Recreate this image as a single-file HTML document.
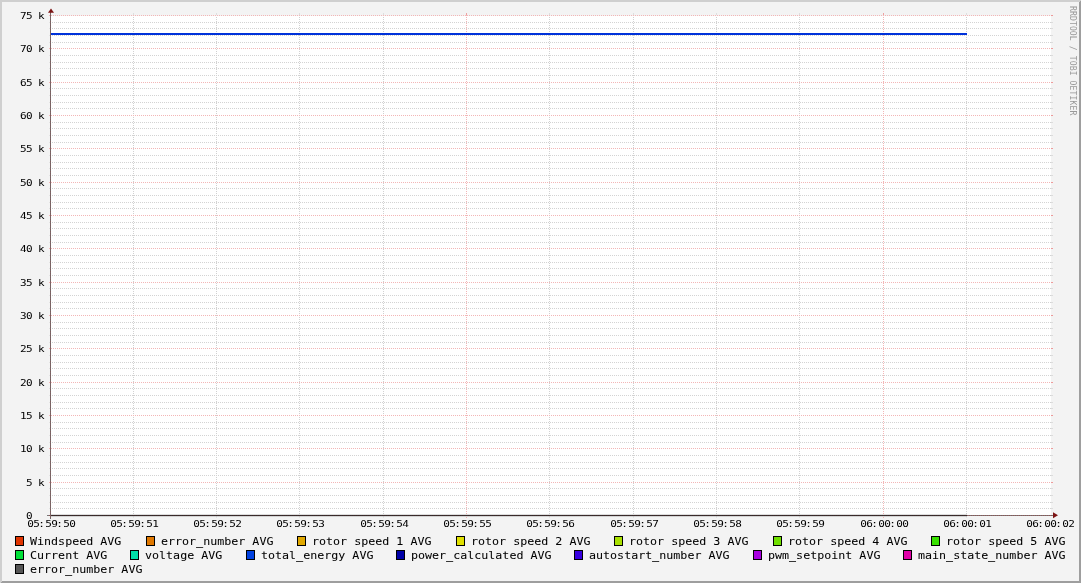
<!DOCTYPE html>
<html><head><meta charset="utf-8"><title>RRDtool graph</title>
<style>html,body{margin:0;padding:0;background:#f3f3f3;overflow:hidden}svg{display:block;will-change:transform}text{font-family:"DejaVu Sans Mono","Liberation Mono",monospace;fill:#000;white-space:pre;stroke:#000;stroke-width:0.05px}.ax{font-size:9.2px;letter-spacing:-0.539px;stroke:none}.lg{font-size:11.2px}.wm{font-size:8.1px;letter-spacing:0.1px;fill:#999999;stroke:none}</style></head><body>
<svg width="1081" height="583" viewBox="0 0 1081 583">
<rect x="0" y="0" width="1081" height="583" fill="#f3f3f3"/>
<g shape-rendering="crispEdges">
<rect x="0" y="0" width="1081" height="2" fill="#cfcfcf"/>
<rect x="0" y="0" width="2" height="583" fill="#cfcfcf"/>
<polygon points="1081,0 1081,583 0,583 2,581 1079,581 1079,2" fill="#9e9e9e"/>
<rect x="51" y="16" width="1000" height="500" fill="#ffffff"/>
<line x1="52" y1="508.5" x2="1051" y2="508.5" stroke="#d3d3d3" stroke-width="1" stroke-dasharray="1 1"/>
<line x1="1051" y1="508.5" x2="1053" y2="508.5" stroke="#dcdcdc" stroke-width="1"/>
<line x1="49" y1="508.5" x2="51" y2="508.5" stroke="#e2e2e2" stroke-width="1"/>
<line x1="52" y1="502.5" x2="1051" y2="502.5" stroke="#d3d3d3" stroke-width="1" stroke-dasharray="1 1"/>
<line x1="1051" y1="502.5" x2="1053" y2="502.5" stroke="#dcdcdc" stroke-width="1"/>
<line x1="49" y1="502.5" x2="51" y2="502.5" stroke="#e2e2e2" stroke-width="1"/>
<line x1="52" y1="495.5" x2="1051" y2="495.5" stroke="#d3d3d3" stroke-width="1" stroke-dasharray="1 1"/>
<line x1="1051" y1="495.5" x2="1053" y2="495.5" stroke="#dcdcdc" stroke-width="1"/>
<line x1="49" y1="495.5" x2="51" y2="495.5" stroke="#e2e2e2" stroke-width="1"/>
<line x1="52" y1="488.5" x2="1051" y2="488.5" stroke="#d3d3d3" stroke-width="1" stroke-dasharray="1 1"/>
<line x1="1051" y1="488.5" x2="1053" y2="488.5" stroke="#dcdcdc" stroke-width="1"/>
<line x1="49" y1="488.5" x2="51" y2="488.5" stroke="#e2e2e2" stroke-width="1"/>
<line x1="52" y1="475.5" x2="1051" y2="475.5" stroke="#d3d3d3" stroke-width="1" stroke-dasharray="1 1"/>
<line x1="1051" y1="475.5" x2="1053" y2="475.5" stroke="#dcdcdc" stroke-width="1"/>
<line x1="49" y1="475.5" x2="51" y2="475.5" stroke="#e2e2e2" stroke-width="1"/>
<line x1="52" y1="468.5" x2="1051" y2="468.5" stroke="#d3d3d3" stroke-width="1" stroke-dasharray="1 1"/>
<line x1="1051" y1="468.5" x2="1053" y2="468.5" stroke="#dcdcdc" stroke-width="1"/>
<line x1="49" y1="468.5" x2="51" y2="468.5" stroke="#e2e2e2" stroke-width="1"/>
<line x1="52" y1="462.5" x2="1051" y2="462.5" stroke="#d3d3d3" stroke-width="1" stroke-dasharray="1 1"/>
<line x1="1051" y1="462.5" x2="1053" y2="462.5" stroke="#dcdcdc" stroke-width="1"/>
<line x1="49" y1="462.5" x2="51" y2="462.5" stroke="#e2e2e2" stroke-width="1"/>
<line x1="52" y1="455.5" x2="1051" y2="455.5" stroke="#d3d3d3" stroke-width="1" stroke-dasharray="1 1"/>
<line x1="1051" y1="455.5" x2="1053" y2="455.5" stroke="#dcdcdc" stroke-width="1"/>
<line x1="49" y1="455.5" x2="51" y2="455.5" stroke="#e2e2e2" stroke-width="1"/>
<line x1="52" y1="442.5" x2="1051" y2="442.5" stroke="#d3d3d3" stroke-width="1" stroke-dasharray="1 1"/>
<line x1="1051" y1="442.5" x2="1053" y2="442.5" stroke="#dcdcdc" stroke-width="1"/>
<line x1="49" y1="442.5" x2="51" y2="442.5" stroke="#e2e2e2" stroke-width="1"/>
<line x1="52" y1="435.5" x2="1051" y2="435.5" stroke="#d3d3d3" stroke-width="1" stroke-dasharray="1 1"/>
<line x1="1051" y1="435.5" x2="1053" y2="435.5" stroke="#dcdcdc" stroke-width="1"/>
<line x1="49" y1="435.5" x2="51" y2="435.5" stroke="#e2e2e2" stroke-width="1"/>
<line x1="52" y1="428.5" x2="1051" y2="428.5" stroke="#d3d3d3" stroke-width="1" stroke-dasharray="1 1"/>
<line x1="1051" y1="428.5" x2="1053" y2="428.5" stroke="#dcdcdc" stroke-width="1"/>
<line x1="49" y1="428.5" x2="51" y2="428.5" stroke="#e2e2e2" stroke-width="1"/>
<line x1="52" y1="422.5" x2="1051" y2="422.5" stroke="#d3d3d3" stroke-width="1" stroke-dasharray="1 1"/>
<line x1="1051" y1="422.5" x2="1053" y2="422.5" stroke="#dcdcdc" stroke-width="1"/>
<line x1="49" y1="422.5" x2="51" y2="422.5" stroke="#e2e2e2" stroke-width="1"/>
<line x1="52" y1="408.5" x2="1051" y2="408.5" stroke="#d3d3d3" stroke-width="1" stroke-dasharray="1 1"/>
<line x1="1051" y1="408.5" x2="1053" y2="408.5" stroke="#dcdcdc" stroke-width="1"/>
<line x1="49" y1="408.5" x2="51" y2="408.5" stroke="#e2e2e2" stroke-width="1"/>
<line x1="52" y1="402.5" x2="1051" y2="402.5" stroke="#d3d3d3" stroke-width="1" stroke-dasharray="1 1"/>
<line x1="1051" y1="402.5" x2="1053" y2="402.5" stroke="#dcdcdc" stroke-width="1"/>
<line x1="49" y1="402.5" x2="51" y2="402.5" stroke="#e2e2e2" stroke-width="1"/>
<line x1="52" y1="395.5" x2="1051" y2="395.5" stroke="#d3d3d3" stroke-width="1" stroke-dasharray="1 1"/>
<line x1="1051" y1="395.5" x2="1053" y2="395.5" stroke="#dcdcdc" stroke-width="1"/>
<line x1="49" y1="395.5" x2="51" y2="395.5" stroke="#e2e2e2" stroke-width="1"/>
<line x1="52" y1="388.5" x2="1051" y2="388.5" stroke="#d3d3d3" stroke-width="1" stroke-dasharray="1 1"/>
<line x1="1051" y1="388.5" x2="1053" y2="388.5" stroke="#dcdcdc" stroke-width="1"/>
<line x1="49" y1="388.5" x2="51" y2="388.5" stroke="#e2e2e2" stroke-width="1"/>
<line x1="52" y1="375.5" x2="1051" y2="375.5" stroke="#d3d3d3" stroke-width="1" stroke-dasharray="1 1"/>
<line x1="1051" y1="375.5" x2="1053" y2="375.5" stroke="#dcdcdc" stroke-width="1"/>
<line x1="49" y1="375.5" x2="51" y2="375.5" stroke="#e2e2e2" stroke-width="1"/>
<line x1="52" y1="368.5" x2="1051" y2="368.5" stroke="#d3d3d3" stroke-width="1" stroke-dasharray="1 1"/>
<line x1="1051" y1="368.5" x2="1053" y2="368.5" stroke="#dcdcdc" stroke-width="1"/>
<line x1="49" y1="368.5" x2="51" y2="368.5" stroke="#e2e2e2" stroke-width="1"/>
<line x1="52" y1="362.5" x2="1051" y2="362.5" stroke="#d3d3d3" stroke-width="1" stroke-dasharray="1 1"/>
<line x1="1051" y1="362.5" x2="1053" y2="362.5" stroke="#dcdcdc" stroke-width="1"/>
<line x1="49" y1="362.5" x2="51" y2="362.5" stroke="#e2e2e2" stroke-width="1"/>
<line x1="52" y1="355.5" x2="1051" y2="355.5" stroke="#d3d3d3" stroke-width="1" stroke-dasharray="1 1"/>
<line x1="1051" y1="355.5" x2="1053" y2="355.5" stroke="#dcdcdc" stroke-width="1"/>
<line x1="49" y1="355.5" x2="51" y2="355.5" stroke="#e2e2e2" stroke-width="1"/>
<line x1="52" y1="342.5" x2="1051" y2="342.5" stroke="#d3d3d3" stroke-width="1" stroke-dasharray="1 1"/>
<line x1="1051" y1="342.5" x2="1053" y2="342.5" stroke="#dcdcdc" stroke-width="1"/>
<line x1="49" y1="342.5" x2="51" y2="342.5" stroke="#e2e2e2" stroke-width="1"/>
<line x1="52" y1="335.5" x2="1051" y2="335.5" stroke="#d3d3d3" stroke-width="1" stroke-dasharray="1 1"/>
<line x1="1051" y1="335.5" x2="1053" y2="335.5" stroke="#dcdcdc" stroke-width="1"/>
<line x1="49" y1="335.5" x2="51" y2="335.5" stroke="#e2e2e2" stroke-width="1"/>
<line x1="52" y1="328.5" x2="1051" y2="328.5" stroke="#d3d3d3" stroke-width="1" stroke-dasharray="1 1"/>
<line x1="1051" y1="328.5" x2="1053" y2="328.5" stroke="#dcdcdc" stroke-width="1"/>
<line x1="49" y1="328.5" x2="51" y2="328.5" stroke="#e2e2e2" stroke-width="1"/>
<line x1="52" y1="322.5" x2="1051" y2="322.5" stroke="#d3d3d3" stroke-width="1" stroke-dasharray="1 1"/>
<line x1="1051" y1="322.5" x2="1053" y2="322.5" stroke="#dcdcdc" stroke-width="1"/>
<line x1="49" y1="322.5" x2="51" y2="322.5" stroke="#e2e2e2" stroke-width="1"/>
<line x1="52" y1="308.5" x2="1051" y2="308.5" stroke="#d3d3d3" stroke-width="1" stroke-dasharray="1 1"/>
<line x1="1051" y1="308.5" x2="1053" y2="308.5" stroke="#dcdcdc" stroke-width="1"/>
<line x1="49" y1="308.5" x2="51" y2="308.5" stroke="#e2e2e2" stroke-width="1"/>
<line x1="52" y1="302.5" x2="1051" y2="302.5" stroke="#d3d3d3" stroke-width="1" stroke-dasharray="1 1"/>
<line x1="1051" y1="302.5" x2="1053" y2="302.5" stroke="#dcdcdc" stroke-width="1"/>
<line x1="49" y1="302.5" x2="51" y2="302.5" stroke="#e2e2e2" stroke-width="1"/>
<line x1="52" y1="295.5" x2="1051" y2="295.5" stroke="#d3d3d3" stroke-width="1" stroke-dasharray="1 1"/>
<line x1="1051" y1="295.5" x2="1053" y2="295.5" stroke="#dcdcdc" stroke-width="1"/>
<line x1="49" y1="295.5" x2="51" y2="295.5" stroke="#e2e2e2" stroke-width="1"/>
<line x1="52" y1="288.5" x2="1051" y2="288.5" stroke="#d3d3d3" stroke-width="1" stroke-dasharray="1 1"/>
<line x1="1051" y1="288.5" x2="1053" y2="288.5" stroke="#dcdcdc" stroke-width="1"/>
<line x1="49" y1="288.5" x2="51" y2="288.5" stroke="#e2e2e2" stroke-width="1"/>
<line x1="52" y1="275.5" x2="1051" y2="275.5" stroke="#d3d3d3" stroke-width="1" stroke-dasharray="1 1"/>
<line x1="1051" y1="275.5" x2="1053" y2="275.5" stroke="#dcdcdc" stroke-width="1"/>
<line x1="49" y1="275.5" x2="51" y2="275.5" stroke="#e2e2e2" stroke-width="1"/>
<line x1="52" y1="268.5" x2="1051" y2="268.5" stroke="#d3d3d3" stroke-width="1" stroke-dasharray="1 1"/>
<line x1="1051" y1="268.5" x2="1053" y2="268.5" stroke="#dcdcdc" stroke-width="1"/>
<line x1="49" y1="268.5" x2="51" y2="268.5" stroke="#e2e2e2" stroke-width="1"/>
<line x1="52" y1="262.5" x2="1051" y2="262.5" stroke="#d3d3d3" stroke-width="1" stroke-dasharray="1 1"/>
<line x1="1051" y1="262.5" x2="1053" y2="262.5" stroke="#dcdcdc" stroke-width="1"/>
<line x1="49" y1="262.5" x2="51" y2="262.5" stroke="#e2e2e2" stroke-width="1"/>
<line x1="52" y1="255.5" x2="1051" y2="255.5" stroke="#d3d3d3" stroke-width="1" stroke-dasharray="1 1"/>
<line x1="1051" y1="255.5" x2="1053" y2="255.5" stroke="#dcdcdc" stroke-width="1"/>
<line x1="49" y1="255.5" x2="51" y2="255.5" stroke="#e2e2e2" stroke-width="1"/>
<line x1="52" y1="242.5" x2="1051" y2="242.5" stroke="#d3d3d3" stroke-width="1" stroke-dasharray="1 1"/>
<line x1="1051" y1="242.5" x2="1053" y2="242.5" stroke="#dcdcdc" stroke-width="1"/>
<line x1="49" y1="242.5" x2="51" y2="242.5" stroke="#e2e2e2" stroke-width="1"/>
<line x1="52" y1="235.5" x2="1051" y2="235.5" stroke="#d3d3d3" stroke-width="1" stroke-dasharray="1 1"/>
<line x1="1051" y1="235.5" x2="1053" y2="235.5" stroke="#dcdcdc" stroke-width="1"/>
<line x1="49" y1="235.5" x2="51" y2="235.5" stroke="#e2e2e2" stroke-width="1"/>
<line x1="52" y1="228.5" x2="1051" y2="228.5" stroke="#d3d3d3" stroke-width="1" stroke-dasharray="1 1"/>
<line x1="1051" y1="228.5" x2="1053" y2="228.5" stroke="#dcdcdc" stroke-width="1"/>
<line x1="49" y1="228.5" x2="51" y2="228.5" stroke="#e2e2e2" stroke-width="1"/>
<line x1="52" y1="222.5" x2="1051" y2="222.5" stroke="#d3d3d3" stroke-width="1" stroke-dasharray="1 1"/>
<line x1="1051" y1="222.5" x2="1053" y2="222.5" stroke="#dcdcdc" stroke-width="1"/>
<line x1="49" y1="222.5" x2="51" y2="222.5" stroke="#e2e2e2" stroke-width="1"/>
<line x1="52" y1="208.5" x2="1051" y2="208.5" stroke="#d3d3d3" stroke-width="1" stroke-dasharray="1 1"/>
<line x1="1051" y1="208.5" x2="1053" y2="208.5" stroke="#dcdcdc" stroke-width="1"/>
<line x1="49" y1="208.5" x2="51" y2="208.5" stroke="#e2e2e2" stroke-width="1"/>
<line x1="52" y1="202.5" x2="1051" y2="202.5" stroke="#d3d3d3" stroke-width="1" stroke-dasharray="1 1"/>
<line x1="1051" y1="202.5" x2="1053" y2="202.5" stroke="#dcdcdc" stroke-width="1"/>
<line x1="49" y1="202.5" x2="51" y2="202.5" stroke="#e2e2e2" stroke-width="1"/>
<line x1="52" y1="195.5" x2="1051" y2="195.5" stroke="#d3d3d3" stroke-width="1" stroke-dasharray="1 1"/>
<line x1="1051" y1="195.5" x2="1053" y2="195.5" stroke="#dcdcdc" stroke-width="1"/>
<line x1="49" y1="195.5" x2="51" y2="195.5" stroke="#e2e2e2" stroke-width="1"/>
<line x1="52" y1="188.5" x2="1051" y2="188.5" stroke="#d3d3d3" stroke-width="1" stroke-dasharray="1 1"/>
<line x1="1051" y1="188.5" x2="1053" y2="188.5" stroke="#dcdcdc" stroke-width="1"/>
<line x1="49" y1="188.5" x2="51" y2="188.5" stroke="#e2e2e2" stroke-width="1"/>
<line x1="52" y1="175.5" x2="1051" y2="175.5" stroke="#d3d3d3" stroke-width="1" stroke-dasharray="1 1"/>
<line x1="1051" y1="175.5" x2="1053" y2="175.5" stroke="#dcdcdc" stroke-width="1"/>
<line x1="49" y1="175.5" x2="51" y2="175.5" stroke="#e2e2e2" stroke-width="1"/>
<line x1="52" y1="168.5" x2="1051" y2="168.5" stroke="#d3d3d3" stroke-width="1" stroke-dasharray="1 1"/>
<line x1="1051" y1="168.5" x2="1053" y2="168.5" stroke="#dcdcdc" stroke-width="1"/>
<line x1="49" y1="168.5" x2="51" y2="168.5" stroke="#e2e2e2" stroke-width="1"/>
<line x1="52" y1="162.5" x2="1051" y2="162.5" stroke="#d3d3d3" stroke-width="1" stroke-dasharray="1 1"/>
<line x1="1051" y1="162.5" x2="1053" y2="162.5" stroke="#dcdcdc" stroke-width="1"/>
<line x1="49" y1="162.5" x2="51" y2="162.5" stroke="#e2e2e2" stroke-width="1"/>
<line x1="52" y1="155.5" x2="1051" y2="155.5" stroke="#d3d3d3" stroke-width="1" stroke-dasharray="1 1"/>
<line x1="1051" y1="155.5" x2="1053" y2="155.5" stroke="#dcdcdc" stroke-width="1"/>
<line x1="49" y1="155.5" x2="51" y2="155.5" stroke="#e2e2e2" stroke-width="1"/>
<line x1="52" y1="142.5" x2="1051" y2="142.5" stroke="#d3d3d3" stroke-width="1" stroke-dasharray="1 1"/>
<line x1="1051" y1="142.5" x2="1053" y2="142.5" stroke="#dcdcdc" stroke-width="1"/>
<line x1="49" y1="142.5" x2="51" y2="142.5" stroke="#e2e2e2" stroke-width="1"/>
<line x1="52" y1="135.5" x2="1051" y2="135.5" stroke="#d3d3d3" stroke-width="1" stroke-dasharray="1 1"/>
<line x1="1051" y1="135.5" x2="1053" y2="135.5" stroke="#dcdcdc" stroke-width="1"/>
<line x1="49" y1="135.5" x2="51" y2="135.5" stroke="#e2e2e2" stroke-width="1"/>
<line x1="52" y1="128.5" x2="1051" y2="128.5" stroke="#d3d3d3" stroke-width="1" stroke-dasharray="1 1"/>
<line x1="1051" y1="128.5" x2="1053" y2="128.5" stroke="#dcdcdc" stroke-width="1"/>
<line x1="49" y1="128.5" x2="51" y2="128.5" stroke="#e2e2e2" stroke-width="1"/>
<line x1="52" y1="122.5" x2="1051" y2="122.5" stroke="#d3d3d3" stroke-width="1" stroke-dasharray="1 1"/>
<line x1="1051" y1="122.5" x2="1053" y2="122.5" stroke="#dcdcdc" stroke-width="1"/>
<line x1="49" y1="122.5" x2="51" y2="122.5" stroke="#e2e2e2" stroke-width="1"/>
<line x1="52" y1="108.5" x2="1051" y2="108.5" stroke="#d3d3d3" stroke-width="1" stroke-dasharray="1 1"/>
<line x1="1051" y1="108.5" x2="1053" y2="108.5" stroke="#dcdcdc" stroke-width="1"/>
<line x1="49" y1="108.5" x2="51" y2="108.5" stroke="#e2e2e2" stroke-width="1"/>
<line x1="52" y1="102.5" x2="1051" y2="102.5" stroke="#d3d3d3" stroke-width="1" stroke-dasharray="1 1"/>
<line x1="1051" y1="102.5" x2="1053" y2="102.5" stroke="#dcdcdc" stroke-width="1"/>
<line x1="49" y1="102.5" x2="51" y2="102.5" stroke="#e2e2e2" stroke-width="1"/>
<line x1="52" y1="95.5" x2="1051" y2="95.5" stroke="#d3d3d3" stroke-width="1" stroke-dasharray="1 1"/>
<line x1="1051" y1="95.5" x2="1053" y2="95.5" stroke="#dcdcdc" stroke-width="1"/>
<line x1="49" y1="95.5" x2="51" y2="95.5" stroke="#e2e2e2" stroke-width="1"/>
<line x1="52" y1="88.5" x2="1051" y2="88.5" stroke="#d3d3d3" stroke-width="1" stroke-dasharray="1 1"/>
<line x1="1051" y1="88.5" x2="1053" y2="88.5" stroke="#dcdcdc" stroke-width="1"/>
<line x1="49" y1="88.5" x2="51" y2="88.5" stroke="#e2e2e2" stroke-width="1"/>
<line x1="52" y1="75.5" x2="1051" y2="75.5" stroke="#d3d3d3" stroke-width="1" stroke-dasharray="1 1"/>
<line x1="1051" y1="75.5" x2="1053" y2="75.5" stroke="#dcdcdc" stroke-width="1"/>
<line x1="49" y1="75.5" x2="51" y2="75.5" stroke="#e2e2e2" stroke-width="1"/>
<line x1="52" y1="68.5" x2="1051" y2="68.5" stroke="#d3d3d3" stroke-width="1" stroke-dasharray="1 1"/>
<line x1="1051" y1="68.5" x2="1053" y2="68.5" stroke="#dcdcdc" stroke-width="1"/>
<line x1="49" y1="68.5" x2="51" y2="68.5" stroke="#e2e2e2" stroke-width="1"/>
<line x1="52" y1="62.5" x2="1051" y2="62.5" stroke="#d3d3d3" stroke-width="1" stroke-dasharray="1 1"/>
<line x1="1051" y1="62.5" x2="1053" y2="62.5" stroke="#dcdcdc" stroke-width="1"/>
<line x1="49" y1="62.5" x2="51" y2="62.5" stroke="#e2e2e2" stroke-width="1"/>
<line x1="52" y1="55.5" x2="1051" y2="55.5" stroke="#d3d3d3" stroke-width="1" stroke-dasharray="1 1"/>
<line x1="1051" y1="55.5" x2="1053" y2="55.5" stroke="#dcdcdc" stroke-width="1"/>
<line x1="49" y1="55.5" x2="51" y2="55.5" stroke="#e2e2e2" stroke-width="1"/>
<line x1="52" y1="42.5" x2="1051" y2="42.5" stroke="#d3d3d3" stroke-width="1" stroke-dasharray="1 1"/>
<line x1="1051" y1="42.5" x2="1053" y2="42.5" stroke="#dcdcdc" stroke-width="1"/>
<line x1="49" y1="42.5" x2="51" y2="42.5" stroke="#e2e2e2" stroke-width="1"/>
<line x1="52" y1="35.5" x2="1051" y2="35.5" stroke="#d3d3d3" stroke-width="1" stroke-dasharray="1 1"/>
<line x1="1051" y1="35.5" x2="1053" y2="35.5" stroke="#dcdcdc" stroke-width="1"/>
<line x1="49" y1="35.5" x2="51" y2="35.5" stroke="#e2e2e2" stroke-width="1"/>
<line x1="52" y1="28.5" x2="1051" y2="28.5" stroke="#d3d3d3" stroke-width="1" stroke-dasharray="1 1"/>
<line x1="1051" y1="28.5" x2="1053" y2="28.5" stroke="#dcdcdc" stroke-width="1"/>
<line x1="49" y1="28.5" x2="51" y2="28.5" stroke="#e2e2e2" stroke-width="1"/>
<line x1="52" y1="22.5" x2="1051" y2="22.5" stroke="#d3d3d3" stroke-width="1" stroke-dasharray="1 1"/>
<line x1="1051" y1="22.5" x2="1053" y2="22.5" stroke="#dcdcdc" stroke-width="1"/>
<line x1="49" y1="22.5" x2="51" y2="22.5" stroke="#e2e2e2" stroke-width="1"/>
<line x1="133.5" y1="17" x2="133.5" y2="515" stroke="#d1d1d1" stroke-width="1" stroke-dasharray="1 1"/>
<line x1="133.5" y1="516" x2="133.5" y2="518" stroke="#e4e4e4" stroke-width="1"/>
<line x1="133.5" y1="13" x2="133.5" y2="15" stroke="#dedede" stroke-width="1"/>
<line x1="216.5" y1="17" x2="216.5" y2="515" stroke="#d1d1d1" stroke-width="1" stroke-dasharray="1 1"/>
<line x1="216.5" y1="516" x2="216.5" y2="518" stroke="#e4e4e4" stroke-width="1"/>
<line x1="216.5" y1="13" x2="216.5" y2="15" stroke="#dedede" stroke-width="1"/>
<line x1="299.5" y1="17" x2="299.5" y2="515" stroke="#d1d1d1" stroke-width="1" stroke-dasharray="1 1"/>
<line x1="299.5" y1="516" x2="299.5" y2="518" stroke="#e4e4e4" stroke-width="1"/>
<line x1="299.5" y1="13" x2="299.5" y2="15" stroke="#dedede" stroke-width="1"/>
<line x1="383.5" y1="17" x2="383.5" y2="515" stroke="#d1d1d1" stroke-width="1" stroke-dasharray="1 1"/>
<line x1="383.5" y1="516" x2="383.5" y2="518" stroke="#e4e4e4" stroke-width="1"/>
<line x1="383.5" y1="13" x2="383.5" y2="15" stroke="#dedede" stroke-width="1"/>
<line x1="549.5" y1="17" x2="549.5" y2="515" stroke="#d1d1d1" stroke-width="1" stroke-dasharray="1 1"/>
<line x1="549.5" y1="516" x2="549.5" y2="518" stroke="#e4e4e4" stroke-width="1"/>
<line x1="549.5" y1="13" x2="549.5" y2="15" stroke="#dedede" stroke-width="1"/>
<line x1="633.5" y1="17" x2="633.5" y2="515" stroke="#d1d1d1" stroke-width="1" stroke-dasharray="1 1"/>
<line x1="633.5" y1="516" x2="633.5" y2="518" stroke="#e4e4e4" stroke-width="1"/>
<line x1="633.5" y1="13" x2="633.5" y2="15" stroke="#dedede" stroke-width="1"/>
<line x1="716.5" y1="17" x2="716.5" y2="515" stroke="#d1d1d1" stroke-width="1" stroke-dasharray="1 1"/>
<line x1="716.5" y1="516" x2="716.5" y2="518" stroke="#e4e4e4" stroke-width="1"/>
<line x1="716.5" y1="13" x2="716.5" y2="15" stroke="#dedede" stroke-width="1"/>
<line x1="799.5" y1="17" x2="799.5" y2="515" stroke="#d1d1d1" stroke-width="1" stroke-dasharray="1 1"/>
<line x1="799.5" y1="516" x2="799.5" y2="518" stroke="#e4e4e4" stroke-width="1"/>
<line x1="799.5" y1="13" x2="799.5" y2="15" stroke="#dedede" stroke-width="1"/>
<line x1="966.5" y1="17" x2="966.5" y2="515" stroke="#d1d1d1" stroke-width="1" stroke-dasharray="1 1"/>
<line x1="966.5" y1="516" x2="966.5" y2="518" stroke="#e4e4e4" stroke-width="1"/>
<line x1="966.5" y1="13" x2="966.5" y2="15" stroke="#dedede" stroke-width="1"/>
<line x1="49" y1="515.5" x2="1051" y2="515.5" stroke="#f3b6b6" stroke-width="1" stroke-dasharray="1 1"/>
<line x1="1051" y1="515.5" x2="1053" y2="515.5" stroke="#ee9a9a" stroke-width="1"/>
<line x1="49" y1="482.5" x2="1051" y2="482.5" stroke="#f3b6b6" stroke-width="1" stroke-dasharray="1 1"/>
<line x1="1051" y1="482.5" x2="1053" y2="482.5" stroke="#ee9a9a" stroke-width="1"/>
<line x1="49" y1="448.5" x2="1051" y2="448.5" stroke="#f3b6b6" stroke-width="1" stroke-dasharray="1 1"/>
<line x1="1051" y1="448.5" x2="1053" y2="448.5" stroke="#ee9a9a" stroke-width="1"/>
<line x1="49" y1="415.5" x2="1051" y2="415.5" stroke="#f3b6b6" stroke-width="1" stroke-dasharray="1 1"/>
<line x1="1051" y1="415.5" x2="1053" y2="415.5" stroke="#ee9a9a" stroke-width="1"/>
<line x1="49" y1="382.5" x2="1051" y2="382.5" stroke="#f3b6b6" stroke-width="1" stroke-dasharray="1 1"/>
<line x1="1051" y1="382.5" x2="1053" y2="382.5" stroke="#ee9a9a" stroke-width="1"/>
<line x1="49" y1="348.5" x2="1051" y2="348.5" stroke="#f3b6b6" stroke-width="1" stroke-dasharray="1 1"/>
<line x1="1051" y1="348.5" x2="1053" y2="348.5" stroke="#ee9a9a" stroke-width="1"/>
<line x1="49" y1="315.5" x2="1051" y2="315.5" stroke="#f3b6b6" stroke-width="1" stroke-dasharray="1 1"/>
<line x1="1051" y1="315.5" x2="1053" y2="315.5" stroke="#ee9a9a" stroke-width="1"/>
<line x1="49" y1="282.5" x2="1051" y2="282.5" stroke="#f3b6b6" stroke-width="1" stroke-dasharray="1 1"/>
<line x1="1051" y1="282.5" x2="1053" y2="282.5" stroke="#ee9a9a" stroke-width="1"/>
<line x1="49" y1="248.5" x2="1051" y2="248.5" stroke="#f3b6b6" stroke-width="1" stroke-dasharray="1 1"/>
<line x1="1051" y1="248.5" x2="1053" y2="248.5" stroke="#ee9a9a" stroke-width="1"/>
<line x1="49" y1="215.5" x2="1051" y2="215.5" stroke="#f3b6b6" stroke-width="1" stroke-dasharray="1 1"/>
<line x1="1051" y1="215.5" x2="1053" y2="215.5" stroke="#ee9a9a" stroke-width="1"/>
<line x1="49" y1="182.5" x2="1051" y2="182.5" stroke="#f3b6b6" stroke-width="1" stroke-dasharray="1 1"/>
<line x1="1051" y1="182.5" x2="1053" y2="182.5" stroke="#ee9a9a" stroke-width="1"/>
<line x1="49" y1="148.5" x2="1051" y2="148.5" stroke="#f3b6b6" stroke-width="1" stroke-dasharray="1 1"/>
<line x1="1051" y1="148.5" x2="1053" y2="148.5" stroke="#ee9a9a" stroke-width="1"/>
<line x1="49" y1="115.5" x2="1051" y2="115.5" stroke="#f3b6b6" stroke-width="1" stroke-dasharray="1 1"/>
<line x1="1051" y1="115.5" x2="1053" y2="115.5" stroke="#ee9a9a" stroke-width="1"/>
<line x1="49" y1="82.5" x2="1051" y2="82.5" stroke="#f3b6b6" stroke-width="1" stroke-dasharray="1 1"/>
<line x1="1051" y1="82.5" x2="1053" y2="82.5" stroke="#ee9a9a" stroke-width="1"/>
<line x1="49" y1="48.5" x2="1051" y2="48.5" stroke="#f3b6b6" stroke-width="1" stroke-dasharray="1 1"/>
<line x1="1051" y1="48.5" x2="1053" y2="48.5" stroke="#ee9a9a" stroke-width="1"/>
<line x1="49" y1="15.5" x2="1051" y2="15.5" stroke="#f3b6b6" stroke-width="1" stroke-dasharray="1 1"/>
<line x1="1051" y1="15.5" x2="1053" y2="15.5" stroke="#ee9a9a" stroke-width="1"/>
<line x1="466.5" y1="13" x2="466.5" y2="519" stroke="#f3b6b6" stroke-width="1" stroke-dasharray="1 1"/>
<line x1="466.5" y1="13" x2="466.5" y2="15" stroke="#eea0a0" stroke-width="1"/>
<line x1="883.5" y1="13" x2="883.5" y2="519" stroke="#f3b6b6" stroke-width="1" stroke-dasharray="1 1"/>
<line x1="883.5" y1="13" x2="883.5" y2="15" stroke="#eea0a0" stroke-width="1"/>
</g>
<g shape-rendering="crispEdges">
<rect x="51" y="33" width="916" height="2" fill="#0032da"/>
<rect x="51" y="514" width="916" height="1" fill="#555555" fill-opacity="0.2"/>
<rect x="51" y="516" width="916" height="1" fill="#555555" fill-opacity="0.2"/>
<rect x="47" y="515" width="1006" height="1" fill="#767676"/>
<line x1="49" y1="515.5" x2="1053" y2="515.5" stroke="#905555" stroke-width="1" stroke-dasharray="1 1"/>
<rect x="51" y="515" width="916" height="1" fill="#2e2e2e"/>
<line x1="51" y1="515.5" x2="967" y2="515.5" stroke="#472828" stroke-width="1" stroke-dasharray="1 1"/>
<rect x="50" y="12" width="1" height="507" fill="#6e6e6e"/>
<line x1="50.5" y1="13" x2="50.5" y2="519" stroke="#86595a" stroke-width="1" stroke-dasharray="1 1"/>
</g>
<polygon points="48,12.8 54,12.8 51,8.4" fill="#7d1414"/>
<polygon points="1053,512.2 1053,518.2 1058,515.2" fill="#7d1414"/>
<g>
<text class="ax" transform="translate(44.0,519.0) scale(1.2,1)" text-anchor="end">0  </text>
<text class="ax" transform="translate(44.0,486.0) scale(1.2,1)" text-anchor="end">5 k</text>
<text class="ax" transform="translate(44.0,452.0) scale(1.2,1)" text-anchor="end">10 k</text>
<text class="ax" transform="translate(44.0,419.0) scale(1.2,1)" text-anchor="end">15 k</text>
<text class="ax" transform="translate(44.0,386.0) scale(1.2,1)" text-anchor="end">20 k</text>
<text class="ax" transform="translate(44.0,352.0) scale(1.2,1)" text-anchor="end">25 k</text>
<text class="ax" transform="translate(44.0,319.0) scale(1.2,1)" text-anchor="end">30 k</text>
<text class="ax" transform="translate(44.0,286.0) scale(1.2,1)" text-anchor="end">35 k</text>
<text class="ax" transform="translate(44.0,252.0) scale(1.2,1)" text-anchor="end">40 k</text>
<text class="ax" transform="translate(44.0,219.0) scale(1.2,1)" text-anchor="end">45 k</text>
<text class="ax" transform="translate(44.0,186.0) scale(1.2,1)" text-anchor="end">50 k</text>
<text class="ax" transform="translate(44.0,152.0) scale(1.2,1)" text-anchor="end">55 k</text>
<text class="ax" transform="translate(44.0,119.0) scale(1.2,1)" text-anchor="end">60 k</text>
<text class="ax" transform="translate(44.0,86.0) scale(1.2,1)" text-anchor="end">65 k</text>
<text class="ax" transform="translate(44.0,52.0) scale(1.2,1)" text-anchor="end">70 k</text>
<text class="ax" transform="translate(44.0,19.0) scale(1.2,1)" text-anchor="end">75 k</text>
<text class="ax" transform="translate(51.30,527.0) scale(1.2,1)" text-anchor="middle" dx="0 0 -0.8 0.8 0 -0.8 0.8 0">05:59:50</text>
<text class="ax" transform="translate(134.30,527.0) scale(1.2,1)" text-anchor="middle" dx="0 0 -0.8 0.8 0 -0.8 0.8 0">05:59:51</text>
<text class="ax" transform="translate(217.30,527.0) scale(1.2,1)" text-anchor="middle" dx="0 0 -0.8 0.8 0 -0.8 0.8 0">05:59:52</text>
<text class="ax" transform="translate(300.30,527.0) scale(1.2,1)" text-anchor="middle" dx="0 0 -0.8 0.8 0 -0.8 0.8 0">05:59:53</text>
<text class="ax" transform="translate(384.30,527.0) scale(1.2,1)" text-anchor="middle" dx="0 0 -0.8 0.8 0 -0.8 0.8 0">05:59:54</text>
<text class="ax" transform="translate(467.30,527.0) scale(1.2,1)" text-anchor="middle" dx="0 0 -0.8 0.8 0 -0.8 0.8 0">05:59:55</text>
<text class="ax" transform="translate(550.30,527.0) scale(1.2,1)" text-anchor="middle" dx="0 0 -0.8 0.8 0 -0.8 0.8 0">05:59:56</text>
<text class="ax" transform="translate(634.30,527.0) scale(1.2,1)" text-anchor="middle" dx="0 0 -0.8 0.8 0 -0.8 0.8 0">05:59:57</text>
<text class="ax" transform="translate(717.30,527.0) scale(1.2,1)" text-anchor="middle" dx="0 0 -0.8 0.8 0 -0.8 0.8 0">05:59:58</text>
<text class="ax" transform="translate(800.30,527.0) scale(1.2,1)" text-anchor="middle" dx="0 0 -0.8 0.8 0 -0.8 0.8 0">05:59:59</text>
<text class="ax" transform="translate(884.30,527.0) scale(1.2,1)" text-anchor="middle" dx="0 0 -0.8 0.8 0 -0.8 0.8 0">06:00:00</text>
<text class="ax" transform="translate(967.30,527.0) scale(1.2,1)" text-anchor="middle" dx="0 0 -0.8 0.8 0 -0.8 0.8 0">06:00:01</text>
<text class="ax" transform="translate(1050.30,527.0) scale(1.2,1)" text-anchor="middle" dx="0 0 -0.8 0.8 0 -0.8 0.8 0">06:00:02</text>
<rect x="15.5" y="536.5" width="8" height="9" fill="#e03400" stroke="#000" stroke-width="1" shape-rendering="crispEdges"/>
<text class="lg" transform="translate(30.0,545.0) scale(1.0427,1)">Windspeed AVG</text>
<rect x="146.5" y="536.5" width="8" height="9" fill="#e07800" stroke="#000" stroke-width="1" shape-rendering="crispEdges"/>
<text class="lg" transform="translate(161.0,545.0) scale(1.0427,1)">error_number AVG</text>
<rect x="196" y="547" width="7" height="1" fill="#000" fill-opacity="0.62" shape-rendering="crispEdges"/>
<rect x="297.5" y="536.5" width="8" height="9" fill="#e0a800" stroke="#000" stroke-width="1" shape-rendering="crispEdges"/>
<text class="lg" transform="translate(312.0,545.0) scale(1.0427,1)">rotor speed 1 AVG</text>
<rect x="456.5" y="536.5" width="8" height="9" fill="#e0e000" stroke="#000" stroke-width="1" shape-rendering="crispEdges"/>
<text class="lg" transform="translate(471.0,545.0) scale(1.0427,1)">rotor speed 2 AVG</text>
<rect x="614.5" y="536.5" width="8" height="9" fill="#a8e000" stroke="#000" stroke-width="1" shape-rendering="crispEdges"/>
<text class="lg" transform="translate(629.0,545.0) scale(1.0427,1)">rotor speed 3 AVG</text>
<rect x="773.5" y="536.5" width="8" height="9" fill="#70e000" stroke="#000" stroke-width="1" shape-rendering="crispEdges"/>
<text class="lg" transform="translate(788.0,545.0) scale(1.0427,1)">rotor speed 4 AVG</text>
<rect x="931.5" y="536.5" width="8" height="9" fill="#38e000" stroke="#000" stroke-width="1" shape-rendering="crispEdges"/>
<text class="lg" transform="translate(946.0,545.0) scale(1.0427,1)">rotor speed 5 AVG</text>
<rect x="15.5" y="550.5" width="8" height="9" fill="#00e038" stroke="#000" stroke-width="1" shape-rendering="crispEdges"/>
<text class="lg" transform="translate(30.0,559.0) scale(1.0427,1)">Current AVG</text>
<rect x="130.5" y="550.5" width="8" height="9" fill="#00e0a8" stroke="#000" stroke-width="1" shape-rendering="crispEdges"/>
<text class="lg" transform="translate(145.0,559.0) scale(1.0427,1)">voltage AVG</text>
<rect x="246.5" y="550.5" width="8" height="9" fill="#0040e0" stroke="#000" stroke-width="1" shape-rendering="crispEdges"/>
<text class="lg" transform="translate(261.0,559.0) scale(1.0427,1)">total_energy AVG</text>
<rect x="296" y="561" width="7" height="1" fill="#000" fill-opacity="0.62" shape-rendering="crispEdges"/>
<rect x="396.5" y="550.5" width="8" height="9" fill="#0000a8" stroke="#000" stroke-width="1" shape-rendering="crispEdges"/>
<text class="lg" transform="translate(411.0,559.0) scale(1.0427,1)">power_calculated AVG</text>
<rect x="446" y="561" width="7" height="1" fill="#000" fill-opacity="0.62" shape-rendering="crispEdges"/>
<rect x="574.5" y="550.5" width="8" height="9" fill="#3800e0" stroke="#000" stroke-width="1" shape-rendering="crispEdges"/>
<text class="lg" transform="translate(589.0,559.0) scale(1.0427,1)">autostart_number AVG</text>
<rect x="652" y="561" width="7" height="1" fill="#000" fill-opacity="0.62" shape-rendering="crispEdges"/>
<rect x="753.5" y="550.5" width="8" height="9" fill="#a800e0" stroke="#000" stroke-width="1" shape-rendering="crispEdges"/>
<text class="lg" transform="translate(768.0,559.0) scale(1.0427,1)">pwm_setpoint AVG</text>
<rect x="789" y="561" width="7" height="1" fill="#000" fill-opacity="0.62" shape-rendering="crispEdges"/>
<rect x="903.5" y="550.5" width="8" height="9" fill="#e000a8" stroke="#000" stroke-width="1" shape-rendering="crispEdges"/>
<text class="lg" transform="translate(918.0,559.0) scale(1.0427,1)">main_state_number AVG</text>
<rect x="946" y="561" width="7" height="1" fill="#000" fill-opacity="0.62" shape-rendering="crispEdges"/>
<rect x="988" y="561" width="7" height="1" fill="#000" fill-opacity="0.62" shape-rendering="crispEdges"/>
<rect x="15.5" y="564.5" width="8" height="9" fill="#555555" stroke="#000" stroke-width="1" shape-rendering="crispEdges"/>
<text class="lg" transform="translate(30.0,573.0) scale(1.0427,1)">error_number AVG</text>
<rect x="65" y="575" width="7" height="1" fill="#000" fill-opacity="0.62" shape-rendering="crispEdges"/>
<text class="wm" transform="translate(1069.5,6) rotate(90)" x="0" y="0">RRDTOOL / TOBI OETIKER</text>
</g>
</svg></body></html>
